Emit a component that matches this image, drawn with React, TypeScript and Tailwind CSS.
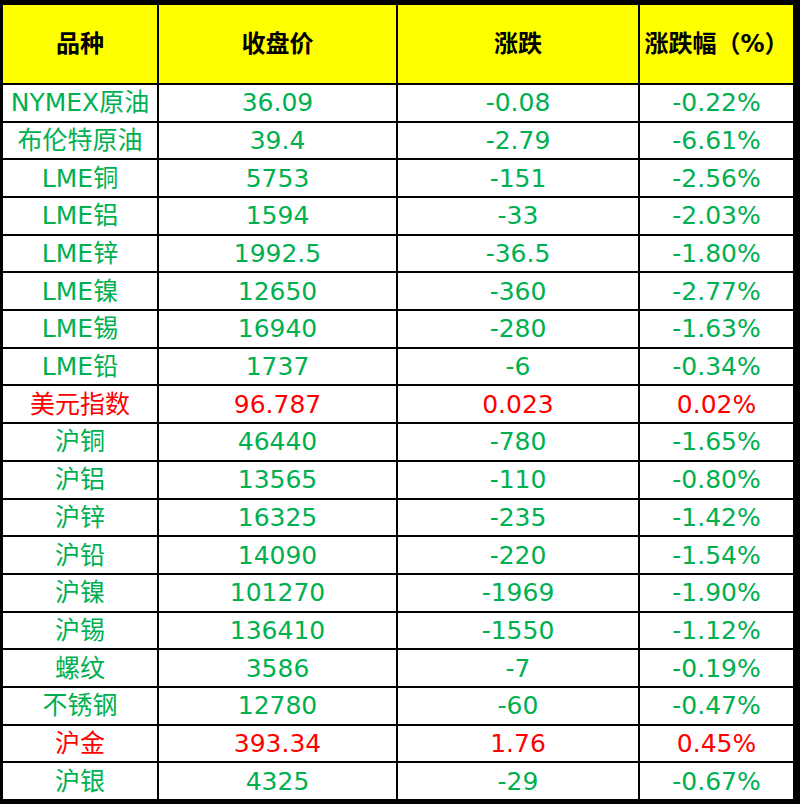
const rows: [string, string, string, string, boolean?][] = [
  ["NYMEX原油", "36.09", "-0.08", "-0.22%"],
  ["布伦特原油", "39.4", "-2.79", "-6.61%"],
  ["LME铜", "5753", "-151", "-2.56%"],
  ["LME铝", "1594", "-33", "-2.03%"],
  ["LME锌", "1992.5", "-36.5", "-1.80%"],
  ["LME镍", "12650", "-360", "-2.77%"],
  ["LME锡", "16940", "-280", "-1.63%"],
  ["LME铅", "1737", "-6", "-0.34%"],
  ["美元指数", "96.787", "0.023", "0.02%", true],
  ["沪铜", "46440", "-780", "-1.65%"],
  ["沪铝", "13565", "-110", "-0.80%"],
  ["沪锌", "16325", "-235", "-1.42%"],
  ["沪铅", "14090", "-220", "-1.54%"],
  ["沪镍", "101270", "-1969", "-1.90%"],
  ["沪锡", "136410", "-1550", "-1.12%"],
  ["螺纹", "3586", "-7", "-0.19%"],
  ["不锈钢", "12780", "-60", "-0.47%"],
  ["沪金", "393.34", "1.76", "0.45%", true],
  ["沪银", "4325", "-29", "-0.67%"],
];

const headers = ["品种", "收盘价", "涨跌", "涨跌幅（%）"];

export default function App() {
  return (
    <div
      className="w-[800px] h-[804px] bg-black pt-[5px] pl-[3px] pr-[7px] pb-[5px] grid grid-cols-[154px_237px_240px_153px] grid-rows-[78px_repeat(19,minmax(0,1fr))] gap-[2px]"
      style={{ fontFamily: '"DejaVu Sans", "Noto Sans CJK SC", sans-serif' }}
    >
      {headers.map((h) => (
        <div
          key={h}
          className="bg-[#ffff00] flex items-center justify-center text-[24px] font-bold text-black whitespace-nowrap"
        >
          {h}
        </div>
      ))}
      {rows.map((r) =>
        r.slice(0, 4).map((cell, i) => (
          <div
            key={r[0] + i}
            className={`bg-white flex items-center justify-center text-[25px] leading-none whitespace-nowrap ${
              r[4] ? "text-[#ff0000]" : "text-[#00b050]"
            }`}
          >
            {cell as string}
          </div>
        ))
      )}
    </div>
  );
}
